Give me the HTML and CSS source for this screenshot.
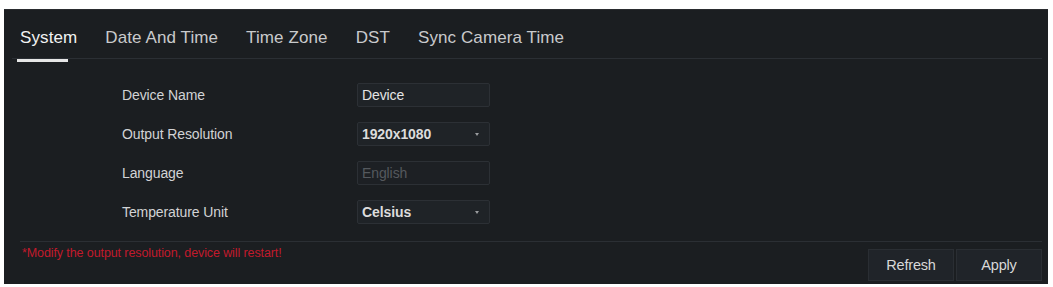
FILE: index.html
```html
<!DOCTYPE html>
<html>
<head>
<meta charset="utf-8">
<link rel="stylesheet" href="styles.css">
</head>
<body>
<div class="panel">
  <div class="tabs">
    <div class="tab active">System</div>
    <div class="tab">Date And Time</div>
    <div class="tab">Time Zone</div>
    <div class="tab">DST</div>
    <div class="tab">Sync Camera Time</div>
  </div>
  <div class="form">
    <div class="label">Device Name</div>
    <div class="field">Device</div>
    <div class="label">Output Resolution</div>
    <div class="field select">1920x1080<span class="caret"></span></div>
    <div class="label">Language</div>
    <div class="field disabled">English</div>
    <div class="label">Temperature Unit</div>
    <div class="field select">Celsius<span class="caret"></span></div>
  </div>
  <div class="footer">
    <div class="warn">*Modify the output resolution, device will restart!</div>
    <div class="buttons">
      <div class="btn">Refresh</div>
      <div class="btn">Apply</div>
    </div>
  </div>
</div>
</body>
</html>
```
FILE: styles.css
```css
html, body {
  margin: 0;
  padding: 0;
  background: #ffffff;
}
body {
  font-family: "Liberation Sans", Arial, sans-serif;
  width: 1053px;
  height: 287px;
  overflow: hidden;
}
.panel {
  margin: 9px 5px 0 4px;
  height: 275px;
  background: #1b1e21;
  box-sizing: border-box;
  border-top: 1px solid #2a2c2f;
  display: flex;
  flex-direction: column;
}
.tabs {
  display: flex;
  height: 48px;
  margin: 0 6px 0 8px;
  border-bottom: 1px solid #2b2f34;
  padding-left: 8px;
  gap: 28px;
}
.tab {
  font-size: 17px;
  color: #c9cacc;
  line-height: 17px;
  padding-top: 19px;
  position: relative;
  letter-spacing: 0.1px;
}
.tab.active {
  color: #f2f2f2;
}
.tab.active::after {
  content: "";
  position: absolute;
  left: -3px;
  width: 51px;
  top: 49px;
  height: 3px;
  background: #e6e6e6;
}
.form {
  display: grid;
  grid-template-columns: 235px 133px;
  grid-auto-rows: 24px;
  row-gap: 15px;
  padding-left: 118px;
  margin-top: 24px;
  align-items: center;
}
.label {
  font-size: 14px;
  color: #d2d3d5;
  letter-spacing: -0.1px;
}
.field {
  height: 24px;
  box-sizing: border-box;
  background: #1f2327;
  border: 1px solid #2c3035;
  border-radius: 2px;
  font-size: 14px;
  color: #e4e4e4;
  padding: 3px 0 0 4px;
  letter-spacing: -0.1px;
  position: relative;
}
.field.select {
  font-weight: bold;
  color: #dcdcdc;
}
.field.disabled {
  color: #55595e;
  background: #1d2024;
}
.caret {
  position: absolute;
  right: 10px;
  top: 10px;
  width: 0;
  height: 0;
  border-left: 2px solid transparent;
  border-right: 2px solid transparent;
  border-top: 3px solid #9a9c9f;
}
.footer {
  margin: 17px 6px 0 16px;
  border-top: 1px solid #2b2f34;
  display: flex;
  justify-content: space-between;
  align-items: flex-start;
}
.warn {
  color: #c21a2c;
  font-size: 12.5px;
  margin-top: 4px;
  margin-left: 2px;
  letter-spacing: -0.1px;
}
.buttons {
  display: flex;
  gap: 2px;
  margin-top: 7px;
}
.btn {
  width: 86px;
  height: 32px;
  box-sizing: border-box;
  background: #202429;
  border: 1px solid #2a2e33;
  color: #d8d8d8;
  font-size: 14.5px;
  letter-spacing: -0.2px;
  display: flex;
  align-items: center;
  justify-content: center;
}
```
